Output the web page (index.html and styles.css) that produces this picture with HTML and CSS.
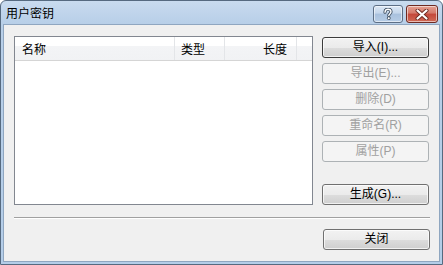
FILE: index.html
```html
<!DOCTYPE html>
<html>
<head>
<meta charset="utf-8">
<link rel="stylesheet" href="styles.css">
</head>
<body>
<div class="window">
  <div class="titlebar">
    <span class="title">用户密钥</span>
    <div class="caption-btns">
      <div class="cap help">
        <svg width="12" height="12" viewBox="0 0 12 12"><path d="M3 4.2 C3 2 4.5 1.2 6 1.2 C7.8 1.2 9 2.2 9 3.8 C9 5.5 6.8 5.8 6.8 7.5" fill="none" stroke="#3d4d60" stroke-width="3.2" stroke-linecap="round"/><path d="M3 4.2 C3 2 4.5 1.2 6 1.2 C7.8 1.2 9 2.2 9 3.8 C9 5.5 6.8 5.8 6.8 7.5" fill="none" stroke="#fff" stroke-width="1.4" stroke-linecap="round"/><circle cx="6.8" cy="10.2" r="1.5" fill="#fff" stroke="#3d4d60" stroke-width="0.9"/></svg>
      </div>
      <div class="cap close">
        <svg width="14" height="11" viewBox="0 0 14 11"><path d="M2.5 1.5 L11.5 9.5 M11.5 1.5 L2.5 9.5" stroke="#6b2a22" stroke-width="4" stroke-linecap="round"/><path d="M2.5 1.5 L11.5 9.5 M11.5 1.5 L2.5 9.5" stroke="#fff" stroke-width="2.2" stroke-linecap="round"/></svg>
      </div>
    </div>
  </div>
  <div class="client">
    <div class="main">
      <div class="list">
        <div class="header">
          <div class="col c-name">名称</div>
          <div class="col c-type">类型</div>
          <div class="col c-len">长度</div>
          <div class="col c-rest"></div>
        </div>
      </div>
      <div class="buttons">
        <button class="btn default">导入(<u>I</u>)...</button>
        <button class="btn" disabled>导出(<u>E</u>)...</button>
        <button class="btn" disabled>删除(<u>D</u>)</button>
        <button class="btn" disabled>重命名(<u>R</u>)</button>
        <button class="btn" disabled>属性(<u>P</u>)</button>
        <button class="btn gen">生成(<u>G</u>)...</button>
      </div>
    </div>
    <div class="separator"></div>
    <div class="footer">
      <button class="btn">关闭</button>
    </div>
  </div>
</div>
</body>
</html>
```
FILE: styles.css
```css
html, body {
  margin: 0;
  padding: 0;
  background: #ffffff;
}
body {
  font-family: "Liberation Sans", "Noto Sans CJK SC", sans-serif;
  font-size: 12px;
}
.window {
  width: 443px;
  height: 265px;
  box-sizing: border-box;
  border: 1px solid #566a80;
  border-radius: 6px 6px 0 0;
  background: linear-gradient(#c9dbef 0px, #b8cfe8 22px, #b4cde8 100%);
  display: flex;
  flex-direction: column;
}
.titlebar {
  height: 23px;
  display: flex;
  align-items: center;
  justify-content: space-between;
  padding-left: 5px;
  padding-right: 4px;
  flex-shrink: 0;
}
.title {
  font-family: "Noto Sans CJK SC", sans-serif;
  font-size: 12px;
  color: #000;
  margin-top: 0px;
}
.caption-btns {
  display: flex;
  gap: 3px;
  align-self: flex-start;
  margin-top: 4px;
}
.cap {
  height: 18px;
  box-sizing: border-box;
  border: 1px solid #5d6f86;
  border-radius: 3px;
  display: flex;
  align-items: center;
  justify-content: center;
  box-shadow: inset 0 0 0 1px rgba(255,255,255,0.55);
}
.help {
  width: 30px;
  background: linear-gradient(#dce8f5 0%, #c4d6eb 45%, #a9c1dd 50%, #b6cde6 100%);
}
.close {
  width: 32px;
  border-color: #6e2a22;
  background: linear-gradient(#e4a192 0%, #d4786a 45%, #c4473a 50%, #d06a56 100%);
}
.client {
  flex: 1;
  margin: 0 2px 2px 2px;
  background: #f0f0f0;
  border: 1px solid #8fa6c0;
  padding: 11px 9px 0 10px;
  display: flex;
  flex-direction: column;
}
.main {
  display: flex;
  gap: 9px;
  height: 169px;
}
.list {
  width: 299px;
  height: 169px;
  box-sizing: border-box;
  border: 1px solid #828790;
  background: #ffffff;
}
.header {
  height: 24px;
  display: flex;
  box-sizing: border-box;
  border-bottom: 1px solid #d5d5d5;
  background: linear-gradient(#ffffff 0%, #ffffff 40%, #f3f4f6 41%, #f1f2f4 100%);
}
.col {
  font-family: "Noto Sans CJK SC", sans-serif;
  font-size: 12px;
  line-height: 23px;
  color: #000;
  box-sizing: border-box;
  border-right: 1px solid #e3e5e8;
}
.c-name { width: 160px; padding-left: 7px; }
.c-type { width: 50px; padding-left: 6px; }
.c-len { width: 72px; text-align: right; padding-right: 9px; }
.c-rest { flex: 1; border-right: none; }
.buttons {
  display: flex;
  flex-direction: column;
  gap: 5px;
  padding-top: 1px;
}
.btn {
  width: 107px;
  height: 21px;
  box-sizing: border-box;
  border: 1px solid #707070;
  border-radius: 3px;
  background: linear-gradient(#f2f2f2 0%, #ebebeb 50%, #dddddd 51%, #cfcfcf 100%);
  box-shadow: inset 0 0 0 1px rgba(255,255,255,0.7);
  font-family: "Liberation Sans", "Noto Sans CJK SC", sans-serif;
  font-size: 12px;
  color: #000;
  padding: 0;
  line-height: 17px;
  margin: 0;
}
.btn u { text-decoration: none; }
.btn.default {
  border-color: #3c3c3c;
}
.btn:disabled {
  border-color: #adb2b5;
  background: #f4f4f4;
  color: #a0a0a0;
  box-shadow: none;
}
.btn.gen {
  margin-top: auto;
}
.separator {
  margin-top: 12px;
  height: 0;
  border-top: 1px solid #a0a0a0;
  border-bottom: 1px solid #ffffff;
  margin-right: 0;
}
.footer {
  display: flex;
  justify-content: flex-end;
  margin-top: 10px;
}
```
